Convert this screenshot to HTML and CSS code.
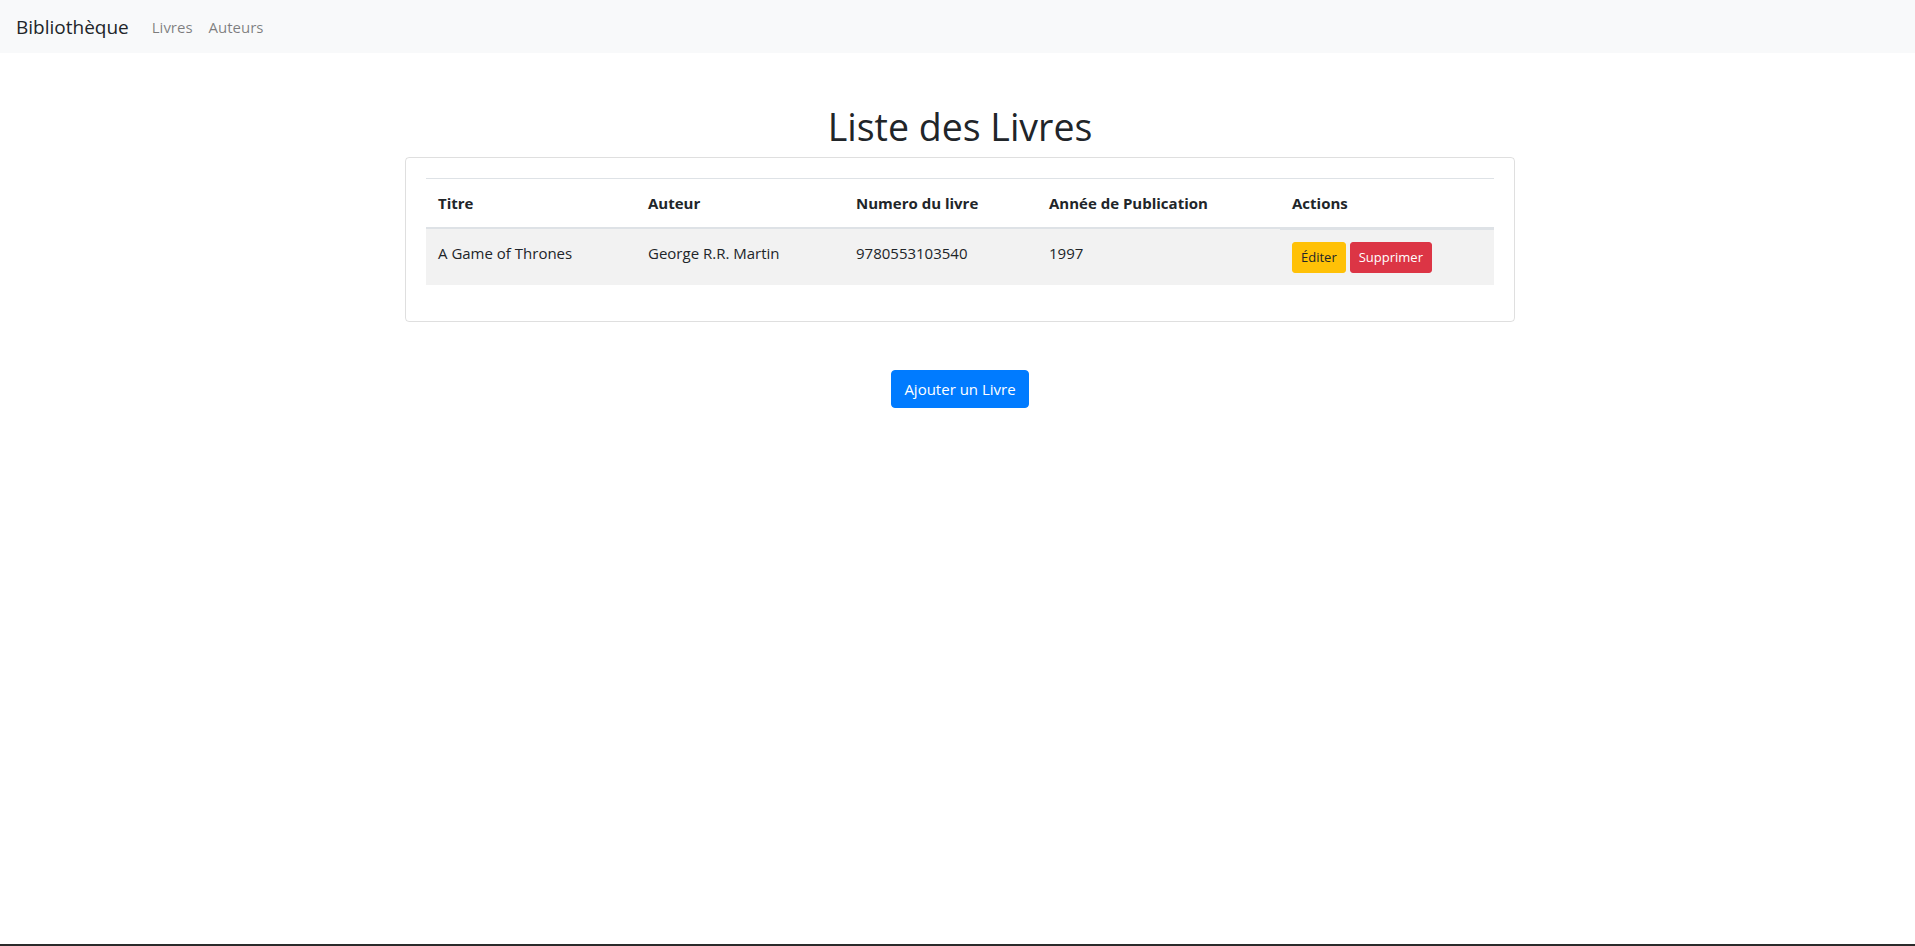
FILE: index.html
```html
<!DOCTYPE html>
<html lang="fr">
<head>
<meta charset="utf-8">
<title>Bibliothèque</title>
<link rel="stylesheet" href="styles.css">
</head>
<body>
<nav class="navbar">
  <a class="brand" href="#">Bibliothèque</a>
  <ul class="nav">
    <li><a class="nav-link" href="#">Livres</a></li>
    <li><a class="nav-link" href="#">Auteurs</a></li>
  </ul>
</nav>
<main class="container">
  <h1 class="title">Liste des Livres</h1>
  <div class="card">
    <table class="table">
      <thead>
        <tr>
          <th class="col-titre">Titre</th>
          <th class="col-auteur">Auteur</th>
          <th class="col-numero">Numero du livre</th>
          <th class="col-annee">Année de Publication</th>
          <th class="col-actions">Actions</th>
        </tr>
      </thead>
      <tbody>
        <tr>
          <td>A Game of Thrones</td>
          <td>George R.R. Martin</td>
          <td>9780553103540</td>
          <td>1997</td>
          <td class="actions">
            <a class="btn-sm btn-warning" href="#">Éditer</a>
            <a class="btn-sm btn-danger" href="#">Supprimer</a>
          </td>
        </tr>
      </tbody>
    </table>
  </div>
  <div class="add-row">
    <a class="btn btn-primary" href="#">Ajouter un Livre</a>
  </div>
</main>
<div class="bottom-bar"></div>
</body>
</html>
```

FILE: styles.css
```css
* { box-sizing: border-box; }

html, body { margin: 0; padding: 0; }

body {
  font-family: "Open Sans", "Noto Sans", sans-serif;
  font-size: 15px;
  line-height: 24px;
  color: #212529;
  background: #fff;
  min-height: 100vh;
  display: flex;
  flex-direction: column;
}

a { text-decoration: none; }

.navbar {
  height: 53px;
  background: #f8f9fa;
  display: flex;
  align-items: center;
  padding: 0 16px;
}

.brand {
  font-size: 19px;
  line-height: 30px;
  color: #212529;
  margin-right: 15px;
}

.nav {
  list-style: none;
  margin: 0;
  padding: 0;
  display: flex;
}

.nav-link {
  display: block;
  padding: 0 8px;
  color: rgba(0, 0, 0, 0.5);
  font-size: 15px;
  line-height: 24px;
}

.container {
  width: 1110px;
  margin: 50px 0 0 calc(50% - 552.5px);
}

.title {
  margin: 0 0 6px;
  text-align: center;
  font-size: 37.5px;
  line-height: 48px;
  font-weight: 400;
}

.card {
  border: 1px solid rgba(0, 0, 0, 0.125);
  border-radius: 4px;
  padding: 20px;
}

.table {
  width: 100%;
  border-collapse: collapse;
  margin-bottom: 16px;
}

.table th,
.table td {
  padding: 12px;
  text-align: left;
  vertical-align: top;
  border-top: 1px solid #dee2e6;
}

.table th {
  font-weight: 700;
  vertical-align: bottom;
  border-bottom: 2px solid #dee2e6;
}

.table tbody tr:nth-of-type(odd) {
  background: rgba(0, 0, 0, 0.05);
}

.col-titre { width: 210px; }
.col-auteur { width: 208px; }
.col-numero { width: 193px; }
.col-annee { width: 243px; }

.actions {
  display: flex;
  gap: 4px;
}

.btn-sm {
  display: inline-block;
  padding: 4px 8px;
  font-size: 13px;
  line-height: 21px;
  border: 1px solid transparent;
  border-radius: 3px;
}

.btn-warning {
  background: #ffc107;
  border-color: #ffc107;
  color: #212529;
}

.btn-danger {
  background: #dc3545;
  border-color: #dc3545;
  color: #fff;
}

.add-row {
  margin-top: 48px;
  display: flex;
  justify-content: center;
}

.btn {
  display: inline-block;
  padding: 6px 12px;
  font-size: 15px;
  line-height: 24px;
  border: 1px solid transparent;
  border-radius: 4px;
}

.btn-primary {
  background: #007bff;
  border-color: #007bff;
  color: #fff;
}

.bottom-bar {
  margin-top: auto;
  height: 2px;
  background: #2b2b2b;
}
```
